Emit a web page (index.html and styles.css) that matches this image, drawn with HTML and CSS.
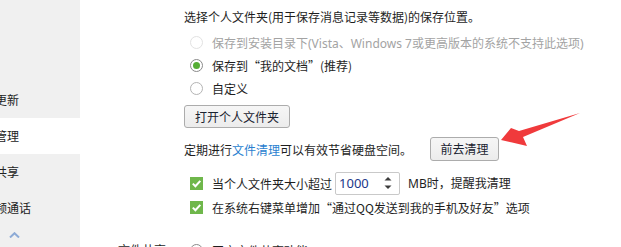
FILE: index.html
```html
<!DOCTYPE html>
<html lang="zh-CN">
<head>
<meta charset="utf-8">
<title>文件管理</title>
<link rel="stylesheet" href="styles.css">
</head>
<body>
<div class="window">
  <aside class="sidebar">
    <div class="nav-item">软件更新</div>
    <div class="nav-item active">文件管理</div>
    <div class="nav-item">文件共享</div>
    <div class="nav-item">音视频通话</div>
    <div class="scroll-up">
      <svg width="11" height="6" viewBox="0 0 11 6"><polyline points="1,5.5 5.5,1.2 10,5.5" fill="none" stroke="#8eabd6" stroke-width="2"/></svg>
    </div>
  </aside>
  <main class="content">
    <section class="section">
      <div class="label"></div>
      <div class="body">
        <p class="title">选择个人文件夹(用于保存消息记录等数据)的保存位置。</p>
        <div class="radio-row disabled"><span class="radio"></span><span class="latin">保存到安装目录下(Vista、Windows 7或更高版本的系统不支持此选项)</span></div>
        <div class="radio-row"><span class="radio checked"></span><span>保存到“我的文档”(推荐)</span></div>
        <div class="radio-row"><span class="radio"></span><span>自定义</span></div>
        <button class="btn open-btn">打开个人文件夹</button>
        <div class="clean-row">
          <span>定期进行<a class="link">文件清理</a>可以有效节省硬盘空间。</span>
          <button class="btn clean-btn">前去清理</button>
        </div>
        <div class="check-row first">
          <span class="checkbox"><svg width="13" height="13" viewBox="0 0 13 13"><polyline points="2.8,6.6 5.4,9.2 10.3,3.8" fill="none" stroke="#fff" stroke-width="2"/></svg></span>
          <span>当个人文件夹大小超过</span>
          <span class="spin">
            <span class="spin-value">1000</span>
            <span class="spin-arrows">
              <svg width="8" height="14" viewBox="0 0 8 14"><polygon points="4,1 7.5,4.5 0.5,4.5" fill="#3c3c3c"/><polygon points="0.5,9.5 7.5,9.5 4,13" fill="#3c3c3c"/></svg>
            </span>
          </span>
          <span class="unit latin">MB时，提醒我清理</span>
        </div>
        <div class="check-row">
          <span class="checkbox"><svg width="13" height="13" viewBox="0 0 13 13"><polyline points="2.8,6.6 5.4,9.2 10.3,3.8" fill="none" stroke="#fff" stroke-width="2"/></svg></span>
          <span>在系统右键菜单增加“通过QQ发送到我的手机及好友”选项</span>
        </div>
      </div>
    </section>
    <section class="section share">
      <div class="label">文件共享</div>
      <div class="body">
        <div class="radio-row"><span class="radio checked"></span><span>开启文件共享功能</span></div>
      </div>
    </section>
  </main>
  <svg class="arrow" width="621" height="247" viewBox="0 0 621 247">
    <polygon points="501,140 511,128 519,131 580,113 523,137 527,146" fill="#f03a3c"/>
  </svg>
</div>
</body>
</html>
```
FILE: styles.css
```css
* { box-sizing: border-box; }
html, body { margin: 0; padding: 0; background: #fff; }
body {
  font-family: "Noto Sans CJK SC", "Noto Sans", sans-serif;
  font-size: 12px;
  color: #1e1e1e;
}
.latin { font-family: "Noto Sans", "Noto Sans CJK SC", sans-serif; }
.window {
  position: relative;
  width: 621px;
  height: 247px;
  overflow: hidden;
  display: flex;
}
.sidebar {
  width: 80px;
  flex: none;
  background: #f0f0f0;
  padding-top: 82px;
  overflow: hidden;
  display: flex;
  flex-direction: column;
}
.nav-item {
  height: 36px;
  line-height: 36px;
  white-space: nowrap;
  text-indent: -29px;
  color: #222;
}
.nav-item.active { background: #fff; }
.scroll-up {
  height: 12px;
  padding-left: 9px;
  padding-top: 6px;
  display: flex;
}
.content {
  flex: 1;
  padding-left: 38px;
  display: flex;
  flex-direction: column;
}
.section {
  display: grid;
  grid-template-columns: 66px 1fr;
}
.label { line-height: 24px; white-space: nowrap; }
.title {
  margin: 7px 0 4px;
  line-height: 20px;
  white-space: nowrap;
}
.radio-row {
  height: 23px;
  display: flex;
  align-items: center;
  padding-left: 6px;
  gap: 9px;
  white-space: nowrap;
}
.radio-row.disabled { color: #a3a3a3; }
.radio {
  width: 13px;
  height: 13px;
  border-radius: 50%;
  border: 1px solid #b4b4b4;
  background: #fff;
  flex: none;
  display: flex;
  align-items: center;
  justify-content: center;
}
.disabled .radio { border-color: #e2e2e2; }
.radio.checked { border-color: #8a8a8a; }
.radio.checked::after {
  content: "";
  width: 7px;
  height: 7px;
  border-radius: 50%;
  background: #55ad35;
}
.btn {
  font: inherit;
  color: #1a2330;
  background: linear-gradient(#f6f6f6, #ececec);
  border: 1px solid #acacac;
  border-radius: 3px;
  padding: 0;
  height: 23px;
  line-height: 21px;
}
.open-btn {
  margin-top: 5px;
  width: 106px;
}
.clean-row {
  margin-top: 9px;
  height: 24px;
  display: flex;
  align-items: center;
  white-space: nowrap;
}
.link { color: #2a7fd0; }
.clean-btn {
  margin-left: 18px;
  width: 69px;
  height: 24px;
  line-height: 22px;
}
.check-row {
  height: 24px;
  display: flex;
  align-items: center;
  padding-left: 6px;
  white-space: nowrap;
}
.check-row.first { margin-top: 10px; }
.checkbox {
  width: 13px;
  height: 13px;
  background: #6fb74b;
  margin-right: 9px;
  display: flex;
  flex: none;
}
.spin {
  margin-left: 3px;
  width: 65px;
  height: 23px;
  border: 1px solid #c9c9c9;
  border-radius: 2px;
  display: flex;
  align-items: center;
  justify-content: space-between;
  padding: 0 7px 0 3px;
}
.spin-value { color: #1c378a; font-family: "Noto Sans", "Noto Sans CJK SC", sans-serif; font-size: 13px; }
.spin-arrows { display: flex; }
.unit { margin-left: 8px; }
.share { margin-top: 19px; }
.share .radio-row { height: 24px; }
.arrow {
  position: absolute;
  left: 0;
  top: 0;
  pointer-events: none;
}
```
